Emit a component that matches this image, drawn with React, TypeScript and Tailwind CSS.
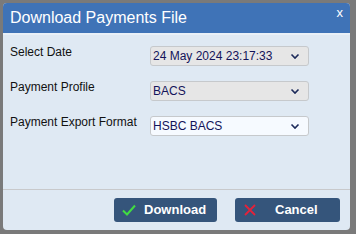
import React from "react";

const Chevron = () => (
  <svg width="10" height="7" viewBox="0 0 10 7" className="shrink-0">
    <path d="M1.5 1.5 L5 5 L8.5 1.5" fill="none" stroke="#1c2a5a" strokeWidth="1.6" />
  </svg>
);

const Select = ({ value, white }: { value: string; white?: boolean }) => (
  <div
    className={`w-[159px] h-[20px] rounded-[3px] border border-[#c6c9cc] flex items-center justify-between pl-[2px] pr-[8px] text-[12px] text-[#14145a] ${
      white ? "bg-[#f6faff]" : "bg-[#e6e6e6]"
    }`}
  >
    <span>{value}</span>
    <Chevron />
  </div>
);

const Row = ({ label, value, white }: { label: string; value: string; white?: boolean }) => (
  <div className="flex items-start h-[20px]">
    <div className="w-[140px] text-[12px] text-[#111] leading-[14px] -mt-[1px]">{label}</div>
    <Select value={value} white={white} />
  </div>
);

export default function App() {
  return (
    <div
      className="w-[356px] h-[234px] bg-[#7a7a7a] p-[3px] pr-[6px] pb-[4px]"
      style={{ fontFamily: '"Liberation Sans", Arial, sans-serif' }}
    >
      <div className="w-[347px] h-[227px] rounded-[4px] overflow-hidden bg-[#dfe9f3] flex flex-col">
        <div className="h-[30px] bg-[#3f73b7] flex items-start justify-between pl-[7px] pr-[7px] shrink-0">
          <span className="text-white text-[16px] leading-[20px] mt-[5px]">Download Payments File</span>
          <span className="text-white text-[13px] leading-[14px] mt-[3px]">x</span>
        </div>
        <div className="h-[2px] bg-[#e9f0f7] shrink-0" />
        <div className="flex flex-col gap-[15px] pl-[7px] pt-[11px] h-[154px] shrink-0">
          <Row label="Select Date" value="24 May 2024 23:17:33" />
          <Row label="Payment Profile" value="BACS" />
          <Row label="Payment Export Format" value="HSBC BACS" white />
        </div>
        <div className="h-[1px] bg-[#c8c9cb] shrink-0" />
        <div className="flex justify-end gap-[18px] pr-[10px] pt-[8px]">
          <button className="w-[103px] h-[24px] rounded-[3px] bg-[#35557b] flex items-center text-white text-[13px] font-bold">
            <svg width="14" height="12" viewBox="0 0 14 12" className="ml-[8px] mr-[8px]">
              <path d="M1 6.5 L5 10.5 L13 1.5" fill="none" stroke="#41dc41" strokeWidth="2" />
            </svg>
            <span>Download</span>
          </button>
          <button className="w-[105px] h-[24px] rounded-[3px] bg-[#35557b] flex items-center text-white text-[13px] font-bold">
            <svg width="12" height="12" viewBox="0 0 12 12" className="ml-[9px] mr-[19px]">
              <path d="M1 1 L11 11 M11 1 L1 11" fill="none" stroke="#e3223a" strokeWidth="1.8" />
            </svg>
            <span>Cancel</span>
          </button>
        </div>
      </div>
    </div>
  );
}
